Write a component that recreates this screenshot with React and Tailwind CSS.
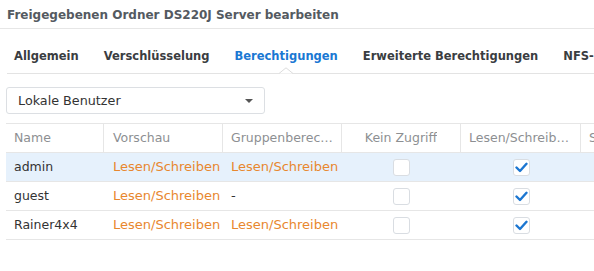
import { useState } from 'react';

const users = [
  { name: 'admin', preview: 'Lesen/Schreiben', group: 'Lesen/Schreiben', none: false, rw: true },
  { name: 'guest', preview: 'Lesen/Schreiben', group: '-', none: false, rw: true },
  { name: 'Rainer4x4', preview: 'Lesen/Schreiben', group: 'Lesen/Schreiben', none: false, rw: true },
];

const tabs = ['Allgemein', 'Verschlüsselung', 'Berechtigungen', 'Erweiterte Berechtigungen', 'NFS-Berechtigungen'];

function Checkbox({ checked }) {
  return (
    <div className="w-[17px] h-[17px] rounded-[3px] border border-[#d9dde2] bg-white flex items-center justify-center">
      {checked && (
        <svg width="13" height="11" viewBox="0 0 13 11">
          <path d="M1.5 5.5 L5 9 L11.5 1.8" fill="none" stroke="#1b76d1" strokeWidth="2.4" strokeLinecap="round" strokeLinejoin="round" />
        </svg>
      )}
    </div>
  );
}

export default function App() {
  const [active, setActive] = useState(2);
  const [selected, setSelected] = useState(0);

  return (
    <div className="w-[594px] h-[271px] overflow-hidden bg-white [font-family:'DejaVu_Sans',sans-serif]">
      {/* ---- TITLE ---- */}
      <div className="h-[29px] pt-[2px] px-[7px] border-b border-[#e6e6e6]">
        <span className="text-[12px] leading-[14px] font-bold text-[#545a61] whitespace-nowrap">
          Freigegebenen Ordner DS220J Server bearbeiten
        </span>
      </div>

      {/* ---- TABS ---- */}
      <div className="ml-[7px] border-b border-[#e3e3e3] flex gap-[25px] pl-[7px] pt-[20px] pb-[10px] whitespace-nowrap">
        {tabs.map((t, i) => (
          <button
            key={t}
            onClick={() => setActive(i)}
            className={`relative text-[11.5px] leading-[14px] font-bold ${i === active ? 'text-[#1a78d3]' : 'text-[#3a3d41]'}`}
          >
            {t}
            {i === active && (
              <svg
                className="absolute left-1/2 -translate-x-1/2 -bottom-[11px]"
                width="14"
                height="7"
                viewBox="0 0 14 7"
              >
                <path d="M0 6.5 L7 0.8 L14 6.5 Z" fill="#fff" />
                <path d="M0 6.5 L7 0.8 L14 6.5" fill="none" stroke="#dcdcdc" strokeWidth="1" />
              </svg>
            )}
          </button>
        ))}
      </div>

      {/* ---- DROPDOWN ---- */}
      <div className="mt-[13px] ml-[6px] w-[259px] h-[27px] border border-[#dcdfe3] rounded-[3px] flex items-center justify-between pl-[11px] pr-[11px]">
        <span className="text-[12.75px] text-[#333]">Lokale Benutzer</span>
        <svg width="8" height="4" viewBox="0 0 8 4">
          <path d="M0 0 L8 0 L4 4 Z" fill="#555" />
        </svg>
      </div>

      {/* ---- TABLE ---- */}
      <div className="mt-[9px] ml-[6px] w-[695px]">
        <div className="flex h-[30px] border-y border-[#e6e6e6] text-[12.5px] text-[#8d8f92] items-stretch">
          <div className="w-[98px] px-[8px] flex items-center border-r border-[#e6e6e6] truncate">Name</div>
          <div className="w-[119px] px-[9px] flex items-center border-r border-[#e6e6e6]">Vorschau</div>
          <div className="w-[119px] px-[8px] flex items-center border-r border-[#e6e6e6] overflow-hidden">
            <span className="truncate">Gruppenberechtigung</span>
          </div>
          <div className="w-[119px] px-[8px] flex items-center justify-center border-r border-[#e6e6e6] overflow-hidden">
            <span className="truncate">Kein Zugriff</span>
          </div>
          <div className="w-[120px] px-[8px] flex items-center justify-center border-r border-[#e6e6e6] overflow-hidden">
            <span className="truncate">Lesen/Schreiben</span>
          </div>
          <div className="w-[120px] px-[8px] flex items-center justify-center overflow-hidden">
            <span className="truncate">Schreibgeschützt</span>
          </div>
        </div>

        {users.map((u, i) => (
          <div
            key={u.name}
            onClick={() => setSelected(i)}
            className={`flex h-[29px] border-b border-[#e6e6e6] items-center ${selected === i ? 'bg-[#e6f1fc]' : 'bg-white'}`}
          >
            <div className="w-[98px] pl-[8px] text-[12.5px] text-[#333]">{u.name}</div>
            <div className="w-[119px] pl-[9px] text-[13px] text-[#e8872e] whitespace-nowrap">{u.preview}</div>
            <div className={`w-[119px] pl-[8px] text-[13px] whitespace-nowrap ${u.group === '-' ? 'text-[#333]' : 'text-[#e8872e]'}`}>
              {u.group}
            </div>
            <div className="w-[119px] flex justify-center">
              <Checkbox checked={u.none} />
            </div>
            <div className="w-[120px] flex justify-center">
              <Checkbox checked={u.rw} />
            </div>
            <div className="w-[120px]" />
          </div>
        ))}
      </div>
    </div>
  );
}
